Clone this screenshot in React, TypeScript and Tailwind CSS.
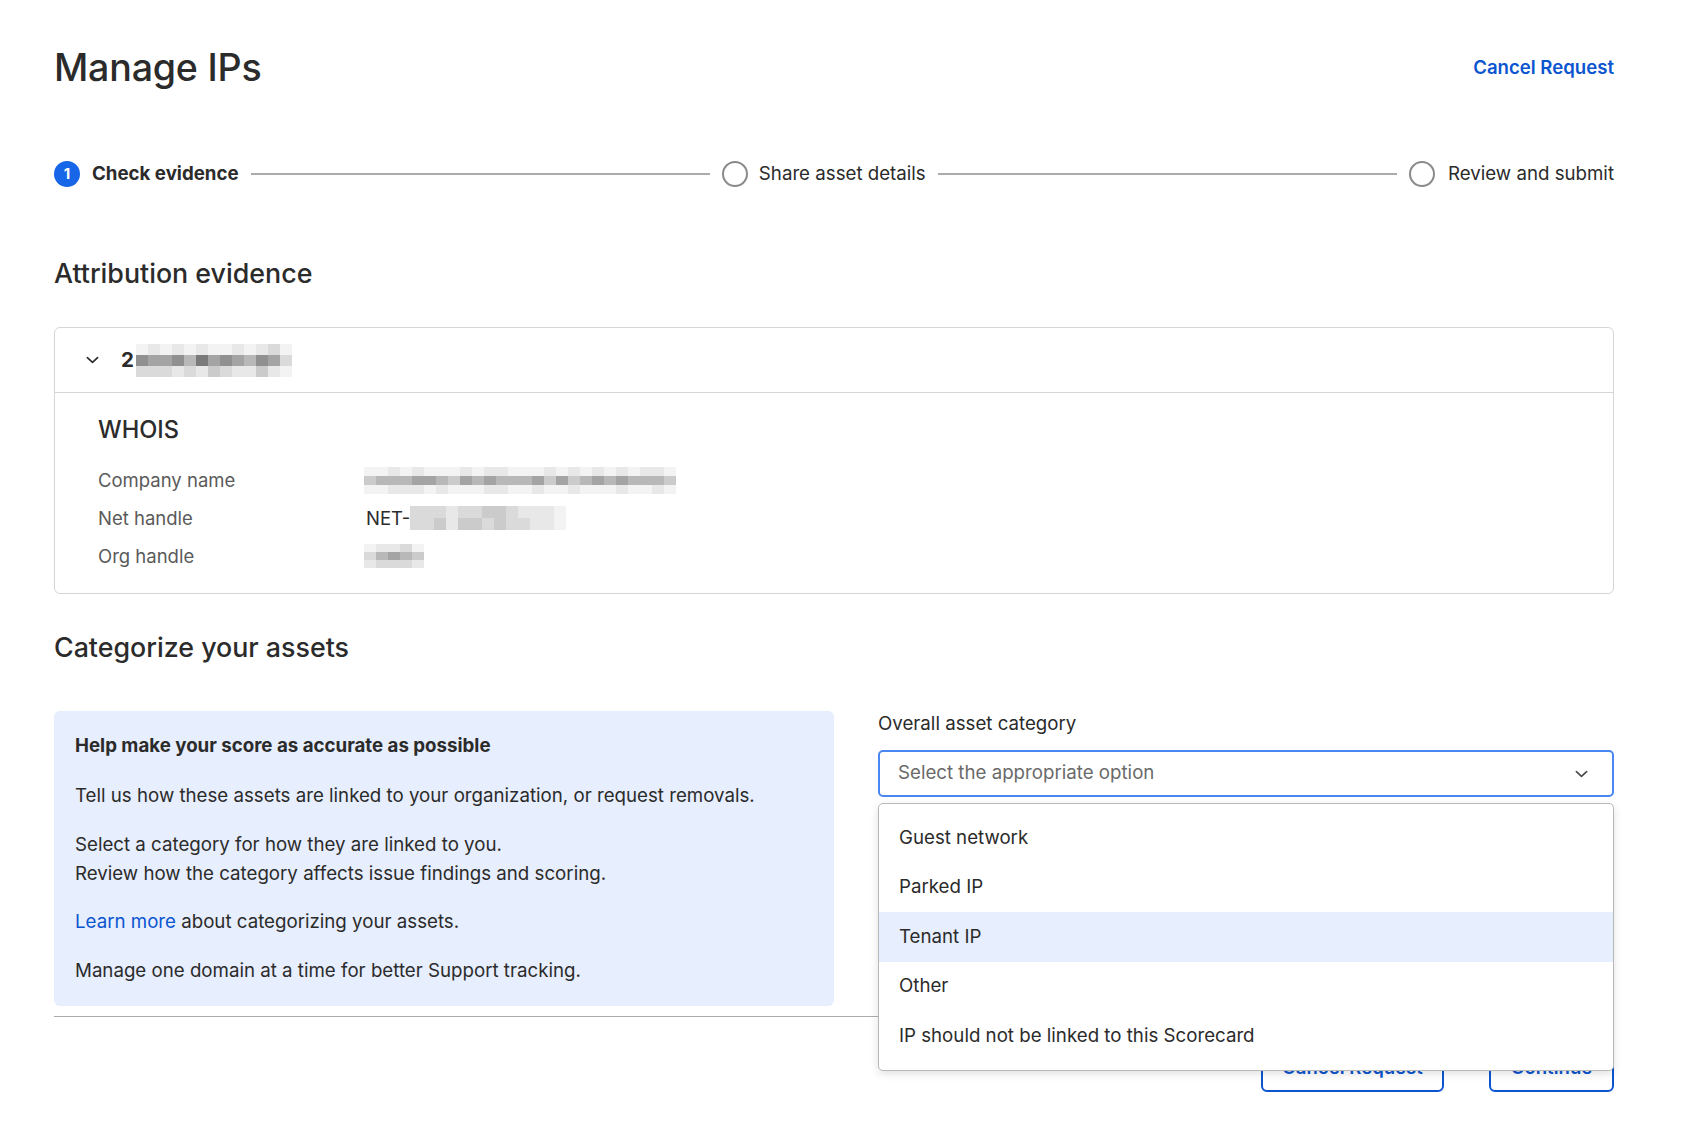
import React from "react";

const P: Record<string, string> = {
  "0": "bg-white",
  "1": "bg-[#f3f3f3]",
  "2": "bg-[#e8e8e8]",
  "3": "bg-[#dadada]",
  "4": "bg-[#cbcbcb]",
  "5": "bg-[#b8b8b8]",
  "6": "bg-[#a4a4a4]",
  "7": "bg-[#909090]",
  "8": "bg-[#7a7a7a]",
};

function Mosaic({ rows, cw, ch }: { rows: string[]; cw: string; ch: string }) {
  return (
    <div className="flex flex-col">
      {rows.map((r, i) => (
        <div key={i} className="flex">
          {r.split("").map((c, j) => (
            <div key={j} className={`${P[c]} ${cw} ${ch}`} />
          ))}
        </div>
      ))}
    </div>
  );
}

function Chevron({ className }: { className: string }) {
  return (
    <svg viewBox="0 0 14 8" className={className} fill="none" stroke="currentColor" strokeWidth="1.8" strokeLinecap="round" strokeLinejoin="round">
      <path d="M1.5 1.5 7 6.5l5.5-5" />
    </svg>
  );
}

export default function App() {
  const options = ["Guest network", "Parked IP", "Tenant IP", "Other", "IP should not be linked to this Scorecard"];
  return (
    <div className="min-h-screen bg-white font-['Inter',sans-serif] text-[#2b2b2b]">
      <div className="w-[1560px] ml-[54px] pt-[45px]">
        <div className="flex items-center justify-between h-[46px]">
          <h1 className="text-[37.6px] leading-[46px] font-medium tracking-[-0.2px]">Manage IPs</h1>
          <a className="text-[18.6px] font-semibold text-[#0b55d0]">Cancel Request</a>
        </div>

        <div className="flex items-center mt-[70px] h-[26px]">
          <div className="w-[26px] h-[26px] rounded-full bg-[#1766e8] flex items-center justify-center text-white text-[15px] font-bold">1</div>
          <span className="ml-[12px] text-[18.7px] font-bold">Check evidence</span>
          <div className="flex-1 h-[2px] bg-[#ababab] mx-[12px]" />
          <div className="w-[26px] h-[26px] rounded-full border-2 border-[#8a8a8a]" />
          <span className="ml-[11px] text-[18.7px]">Share asset details</span>
          <div className="flex-1 h-[2px] bg-[#ababab] mx-[12px]" />
          <div className="w-[26px] h-[26px] rounded-full border-2 border-[#8a8a8a]" />
          <span className="ml-[13px] text-[18.7px]">Review and submit</span>
        </div>

        <h2 className="mt-[70px] text-[26.8px] leading-[32px] font-medium">Attribution evidence</h2>

        <div className="mt-[38px] border border-[#d6d6d6] rounded-md">
          <div className="h-[64px] flex items-center pl-[31px]">
            <Chevron className="w-[13px] h-[8px] text-[#2b2b2b]" />
            <span className="ml-[22px] text-[20.5px] font-bold">2</span>
            <div className="ml-[2px]">
              <Mosaic
                cw="w-[12px]"
                ch="h-[11px]"
                rows={["1212121121231", "7667586765763", "3332324322421"]}
              />
            </div>
          </div>
          <div className="border-t border-[#d6d6d6] pl-[43px] pt-[23px] pb-[18px]">
            <div className="text-[23.6px] leading-[28px] font-medium">WHOIS</div>
            <div className="mt-[17px] text-[18.5px] leading-[38px]">
              <div className="flex items-center">
                <span className="w-[266px] text-[#5a5a5a]">Company name</span>
                <Mosaic
                  cw="w-[12px]"
                  ch="h-[9px]"
                  rows={["11212111212211121212121221", "45556654656555646456565554", "11222121112211211211121121"]}
                />
              </div>
              <div className="flex items-center">
                <span className="w-[268px] text-[#5a5a5a]">Net handle</span>
                <span className="text-[#2b2b2b]">NET-</span>
                <Mosaic cw="w-[12px]" ch="h-[12px]" rows={["3332334432221", "3342443433221"]} />
              </div>
              <div className="flex items-center">
                <span className="w-[266px] text-[#5a5a5a]">Org handle</span>
                <Mosaic cw="w-[12px]" ch="h-[8px]" rows={["122310", "356540", "233320"]} />
              </div>
            </div>
          </div>
        </div>

        <h2 className="mt-[37px] text-[26.8px] leading-[32px] font-medium">Categorize your assets</h2>

        <div className="mt-[48px] flex gap-[44px]">
          <div className="w-[780px] bg-[#e7eefd] rounded-md pt-[20px] pb-[21px] px-[21px] text-[18.7px] leading-[29px]">
            <p className="font-bold">Help make your score as accurate as possible</p>
            <p className="mt-[21px]">Tell us how these assets are linked to your organization, or request removals.</p>
            <p className="mt-[20px]">
              Select a category for how they are linked to you.
              <br />
              Review how the category affects issue findings and scoring.
            </p>
            <p className="mt-[19px]">
              <a className="text-[#0b55d0]">Learn more</a> about categorizing your assets.
            </p>
            <p className="mt-[20px]">Manage one domain at a time for better Support tracking.</p>
          </div>

          <div className="flex-1 relative">
            <div className="text-[18.7px] leading-[26px]">Overall asset category</div>
            <div className="mt-[13px] h-[47px] border-2 border-[#4a87f2] rounded-[5px] flex items-center justify-between pl-[18px] pr-[24px]">
              <span className="text-[18.7px] text-[#6a6a6a]">Select the appropriate option</span>
              <Chevron className="w-[13px] h-[8px] text-[#4a4a4a]" />
            </div>
            <div className="absolute z-10 left-0 right-0 top-[92px] bg-white border border-[#b8b8b8] rounded-[5px] shadow-[0_3px_8px_rgba(0,0,0,0.12)] py-[9px]">
              {options.map((o) => (
                <div
                  key={o}
                  className={`h-[49.5px] flex items-center px-[20px] text-[18.7px] ${o === "Tenant IP" ? "bg-[#e7eefd]" : ""}`}
                >
                  {o}
                </div>
              ))}
            </div>
          </div>
        </div>

        <div className="mt-[10px] h-px bg-[#ababab]" />

        <div className="mt-[27px] flex justify-end gap-[45px]">
          <button className="w-[183px] h-[48px] border-2 border-[#0b55d0] rounded-md text-[18.6px] font-semibold text-[#0b55d0]">Cancel Request</button>
          <button className="w-[125px] h-[48px] border-2 border-[#0b55d0] rounded-md text-[18.6px] font-semibold text-[#0b55d0]">Continue</button>
        </div>
      </div>
    </div>
  );
}
